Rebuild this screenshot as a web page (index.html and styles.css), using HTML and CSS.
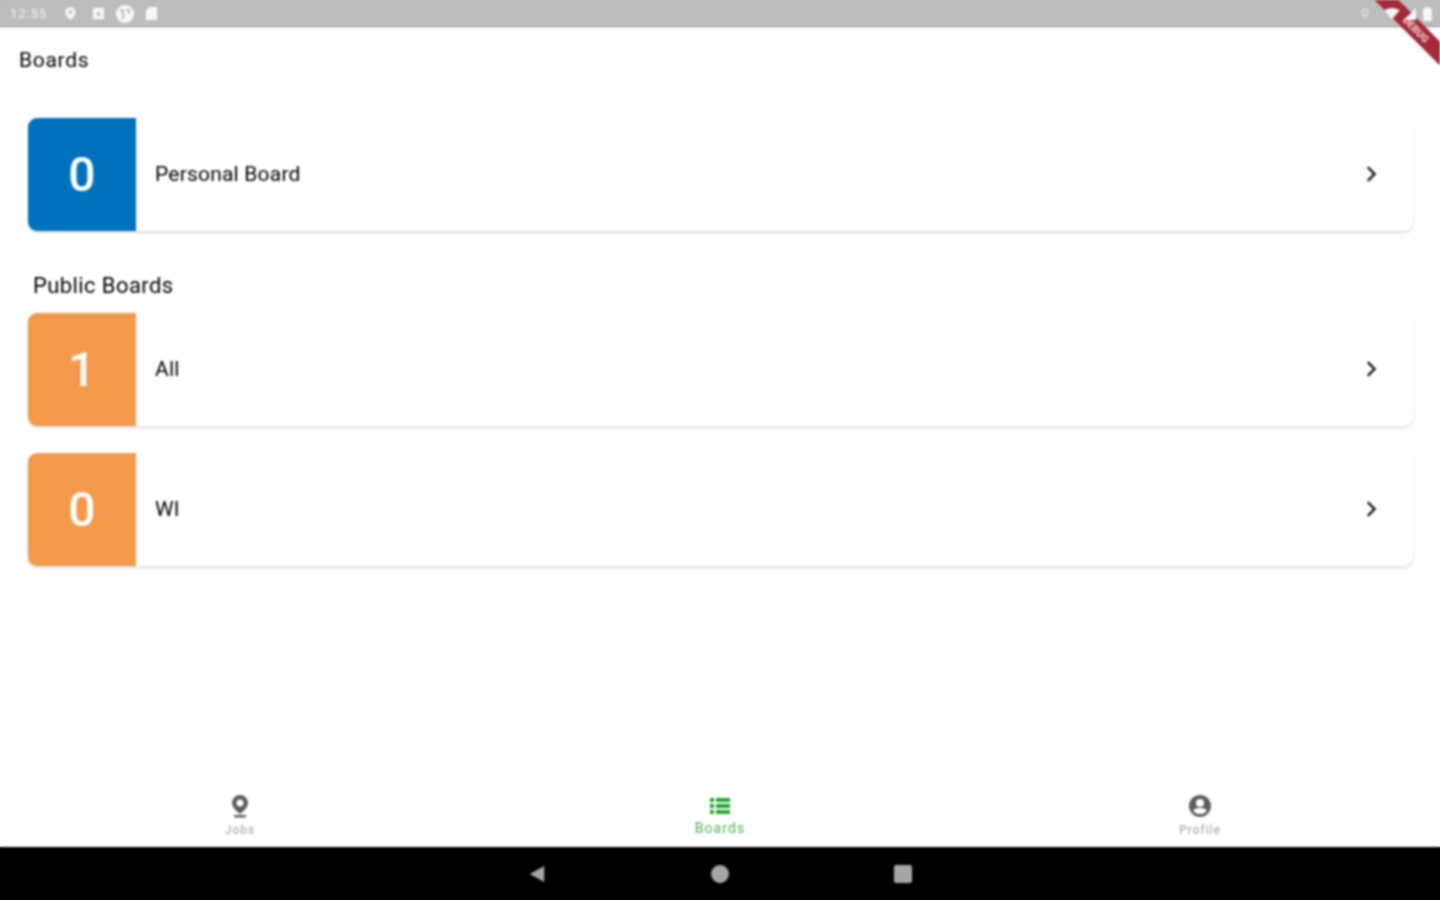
FILE: index.html
```html
<!DOCTYPE html>
<html lang="en">
<head>
  <meta charset="UTF-8" />
  <meta name="viewport" content="width=device-width, initial-scale=1.0" />
  <title>Boards</title>
  <link rel="stylesheet" href="styles.css">
</head>
<body>
  <div class="screen">
    <div class="status-bar">
      <div class="status-group">
        <span class="status-time">12:55</span>
        <svg class="status-icon" viewBox="0 0 16 16"><path fill-rule="evenodd" d="M8 1a5.500 5.500 0 0 0-5.500 5.500C2.500 10.500 8 15 8 15s5.500-4.500 5.500-8.500A5.500 5.500 0 0 0 8 1zm0 3.500a2 2 0 1 1 0 4 2 2 0 0 1 0-4z"/></svg>
        <svg class="status-icon status-icon-photo" viewBox="0 0 16 16"><path fill-rule="evenodd" d="M2 2h12v12H2zM8 5 5 10h6z"/></svg>
        <svg class="status-icon status-icon-lg" viewBox="0 0 20 20"><path fill-rule="evenodd" d="M10 1a9 9 0 1 0 0 18 9 9 0 0 0 0-18zM9 5v10H7V8H5V6zm2 0h4v5h-2V7h-2z"/></svg>
        <svg class="status-icon" viewBox="0 0 16 16"><path d="M6 1h7a1 1 0 0 1 1 1v12a1 1 0 0 1-1 1H3a1 1 0 0 1-1-1V5z"/></svg>
      </div>
      <div class="status-group status-right">
        <svg class="status-icon status-icon-dim" viewBox="0 0 16 16"><path fill-rule="evenodd" d="M8 1a5 5 0 0 0-5 5c0 4 5 9 5 9s5-5 5-9a5 5 0 0 0-5-5zm0 2.500a2.500 2.500 0 1 1 0 5 2.500 2.500 0 0 1 0-5z"/></svg>
        <svg class="status-icon status-icon-wifi" viewBox="0 0 18 14"><path d="M0 2.500Q9-2.500 18 2.500L9 13z"/></svg>
        <svg class="status-icon status-icon-signal" viewBox="0 0 14 14"><path d="M14 0v14H0z"/></svg>
        <svg class="status-icon status-icon-battery" viewBox="0 0 10 16"><path d="M3 0h4v1.500h2a1 1 0 0 1 1 1V15a1 1 0 0 1-1 1H1a1 1 0 0 1-1-1V2.500a1 1 0 0 1 1-1h2z"/></svg>
      </div>
    </div>

    <div class="debug-banner"><span>DEBUG</span></div>

    <h1 class="page-title">Boards</h1>

    <div class="board-list">
      <div class="board-card">
        <div class="board-count count-personal">0</div>
        <div class="board-name">Personal Board</div>
        <svg class="chevron" viewBox="0 0 12 16"><path d="M3 2.500 8.500 8 3 13.500"/></svg>
      </div>

      <h2 class="section-title">Public Boards</h2>

      <div class="board-card">
        <div class="board-count count-public">1</div>
        <div class="board-name">All</div>
        <svg class="chevron" viewBox="0 0 12 16"><path d="M3 2.500 8.500 8 3 13.500"/></svg>
      </div>

      <div class="board-card card-spaced">
        <div class="board-count count-public">0</div>
        <div class="board-name">WI</div>
        <svg class="chevron" viewBox="0 0 12 16"><path d="M3 2.500 8.500 8 3 13.500"/></svg>
      </div>
    </div>

    <nav class="bottom-nav">
      <div class="nav-item">
        <svg class="nav-icon" viewBox="0 0 24 24"><path fill-rule="evenodd" d="M12 1a8 8 0 0 0-8 8c0 5 8 11 8 11s8-6 8-11a8 8 0 0 0-8-8zm0 4.500a3.500 3.500 0 1 1 0 7 3.500 3.500 0 0 1 0-7z"/><rect x="6" y="21" width="12" height="2.500" rx="1"/></svg>
        <span class="nav-label">Jobs</span>
      </div>
      <div class="nav-item nav-active">
        <svg class="nav-icon" viewBox="0 0 24 24"><path d="M2 4h4v4H2zM8 4h14v4H8zM2 10h4v4H2zM8 10h14v4H8zM2 16h4v4H2zM8 16h14v4H8z"/></svg>
        <span class="nav-label">Boards</span>
      </div>
      <div class="nav-item">
        <svg class="nav-icon" viewBox="0 0 24 24"><path fill-rule="evenodd" d="M12 1a11 11 0 1 0 0 22 11 11 0 0 0 0-22zm0 4a4 4 0 1 1 0 8 4 4 0 0 1 0-8zm0 15c-3 0-5.500-1.300-7-3.500 1.500-1.700 4-2.500 7-2.500s5.500.8 7 2.500c-1.500 2.200-4 3.500-7 3.500z"/></svg>
        <span class="nav-label">Profile</span>
      </div>
    </nav>

    <div class="system-bar">
      <svg class="system-icon" viewBox="0 0 18 20"><path d="M17 1v18L1 10z"/></svg>
      <svg class="system-icon" viewBox="0 0 18 18"><circle cx="9" cy="9" r="9"/></svg>
      <svg class="system-icon" viewBox="0 0 18 18"><rect width="18" height="18" rx="2"/></svg>
    </div>
  </div>
</body>
</html>
```

FILE: styles.css
```css
* {
  box-sizing: border-box;
}
body {
  margin: 0;
  height: 900px;
  font-family: Roboto, "Liberation Sans", sans-serif;
  background: linear-gradient(#bdbdbd 27px, #ffffff 27px, #ffffff 847px, #000000 847px);
}
.screen {
  position: relative;
  display: flex;
  flex-direction: column;
  height: 900px;
  overflow: hidden;
  filter: blur(0.8px);
}
.status-bar {
  display: flex;
  justify-content: space-between;
  align-items: center;
  height: 27px;
  padding: 0 10px;
  background: #bdbdbd;
  box-shadow: 0 1px 2px rgba(0,0,0,0.12);
}
.status-group {
  display: flex;
  align-items: center;
  gap: 9px;
}
.status-right {
  position: relative;
  z-index: 1;
  gap: 7px;
  margin-right: -2px;
}
.status-time {
  width: 44px;
  font-size: 13px;
  letter-spacing: 1px;
  color: #f2f2f2;
}
.status-icon {
  width: 15px;
  height: 15px;
  fill: #f8f8f8;
}
.status-icon-photo {
  margin-left: 4px;
}
.status-icon-lg {
  width: 20px;
  height: 20px;
}
.status-icon-dim {
  width: 12px;
  height: 13px;
  margin-right: 6px;
  fill: #d8d8d8;
}
.status-icon-wifi {
  width: 16px;
  height: 12px;
}
.status-icon-signal {
  width: 12px;
  height: 12px;
  margin-left: -3px;
}
.status-icon-battery {
  width: 9px;
  height: 14px;
}
.debug-banner {
  position: absolute;
  top: 21px;
  right: -36px;
  width: 120px;
  height: 17px;
  transform: rotate(45deg);
  background: #a52a38;
  color: #f0d8da;
  font-size: 10px;
  font-weight: 700;
  line-height: 17px;
  text-align: center;
}
.page-title {
  margin: 0;
  padding: 21px 0 0 19px;
  height: 91px;
  font-size: 21px;
  line-height: 25px;
  font-weight: 400;
  letter-spacing: 0.7px;
  color: #000000;
}
.board-list {
  flex: 1;
  padding: 0 27px 0 28px;
}
.board-card {
  display: flex;
  align-items: center;
  height: 113px;
  background: #ffffff;
  border-radius: 9px;
  box-shadow: 0 2px 3px rgba(0,0,0,0.13), 0 0 2px rgba(0,0,0,0.04);
}
.card-spaced {
  margin-top: 27px;
}
.board-count {
  display: flex;
  align-items: center;
  justify-content: center;
  width: 108px;
  height: 100%;
  border-radius: 9px 0 0 9px;
  color: #ffffff;
  font-size: 48px;
  font-weight: 500;
}
.count-personal {
  background: #0071bc;
}
.count-public {
  background: #f29a4a;
}
.board-name {
  flex: 1;
  padding-left: 19px;
  padding-bottom: 1px;
  font-size: 21px;
  letter-spacing: 0.2px;
  color: #000000;
}
.chevron {
  width: 15px;
  height: 20px;
  margin-right: 34px;
  margin-bottom: 2px;
  fill: none;
  stroke: #222222;
  stroke-width: 2;
}
.section-title {
  margin: 0;
  padding: 42px 0 15px 5px;
  font-size: 22px;
  line-height: 25px;
  font-weight: 400;
  letter-spacing: 0.4px;
  color: #000000;
}
.bottom-nav {
  display: flex;
  height: 62px;
  background: #ffffff;
  box-shadow: 0 -1px 2px rgba(0,0,0,0.02);
}
.nav-item {
  flex: 1;
  display: flex;
  flex-direction: column;
  align-items: center;
  padding-top: 8px;
  color: #a0a0a0;
}
.nav-icon {
  width: 24px;
  height: 26px;
  fill: #5c5c5c;
}
.nav-label {
  font-size: 12px;
  line-height: 16px;
  margin-top: 3px;
  letter-spacing: 1px;
}
.nav-active {
  color: #4fb058;
}
.nav-active .nav-icon {
  fill: #22a82e;
}
.nav-active .nav-label {
  font-size: 14px;
  margin-top: 1px;
  letter-spacing: 1.1px;
}
.system-bar {
  display: flex;
  justify-content: center;
  align-items: center;
  gap: 165px;
  height: 53px;
  background: #000000;
}
.system-icon {
  width: 18px;
  height: 18px;
  fill: #a6a6a6;
}
```
